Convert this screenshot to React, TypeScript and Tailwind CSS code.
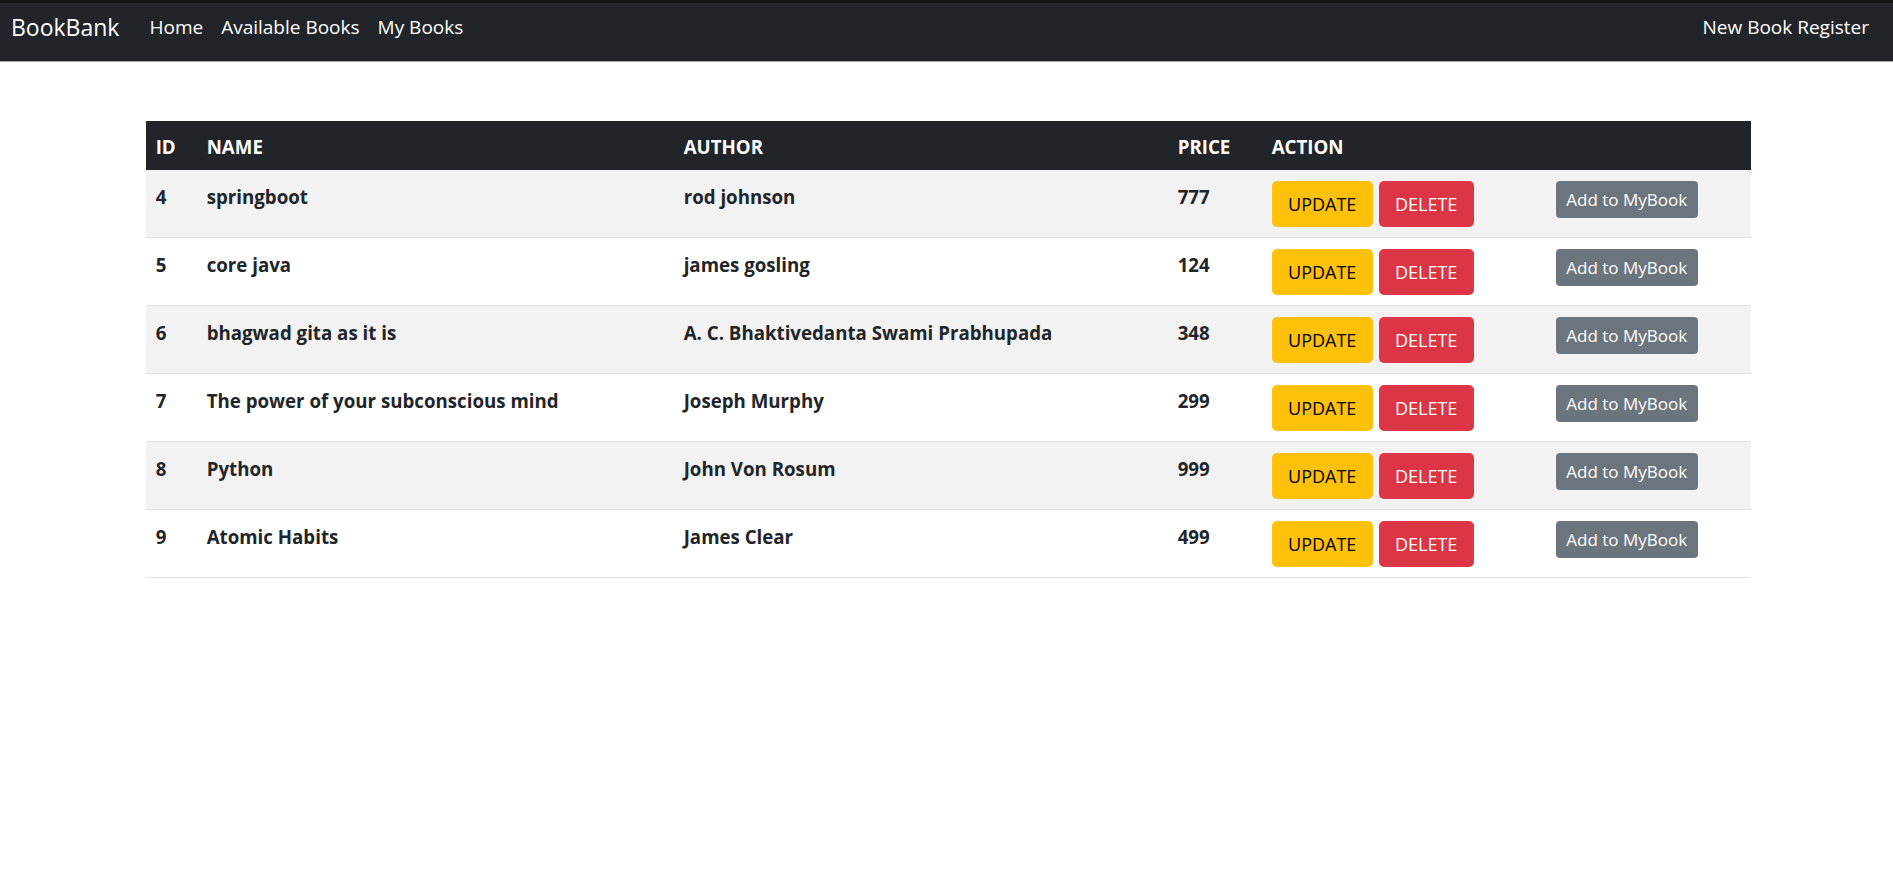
const books = [
  { id: 4, name: 'springboot', author: 'rod johnson', price: 777 },
  { id: 5, name: 'core java', author: 'james gosling', price: 124 },
  { id: 6, name: 'bhagwad gita as it is', author: 'A. C. Bhaktivedanta Swami Prabhupada', price: 348 },
  { id: 7, name: 'The power of your subconscious mind', author: 'Joseph Murphy', price: 299 },
  { id: 8, name: 'Python', author: 'John Von Rosum', price: 999 },
  { id: 9, name: 'Atomic Habits', author: 'James Clear', price: 499 },
];

export default function App() {
  return (
    <div className="min-h-screen bg-white text-[#212529] font-['Open_Sans',sans-serif]">
      <nav className="h-[62px] bg-[#212529] border-t-[3px] border-b border-t-[#111317] border-b-[#a3a3a3] flex items-start justify-between pl-[11px] pr-[24px] pt-[11px] leading-[27px]">
        <div className="flex items-center">
          <span className="text-[23px] text-white mr-[21px]">BookBank</span>
          <a className="text-[19px] text-white px-[9px]">Home</a>
          <a className="text-[19px] text-white px-[9px]">Available Books</a>
          <a className="text-[19px] text-white px-[9px]">My Books</a>
        </div>
        <a className="text-[19px] text-white">New Book Register</a>
      </nav>

      <div className="pl-[4px]">
        <table className="w-[85%] mx-auto mt-[59px] table-fixed border-collapse text-[18.7px] font-bold">
          <colgroup>
            <col className="w-[51px]" />
            <col className="w-[477px]" />
            <col className="w-[494px]" />
            <col className="w-[94px]" />
            <col className="w-[284px]" />
            <col />
          </colgroup>
          <thead>
            <tr className="bg-[#212529] text-white h-[49px] text-left">
              <th className="px-[10px] pt-[11px] pb-[7px]">ID</th>
              <th className="px-[10px] pt-[11px] pb-[7px]">NAME</th>
              <th className="px-[10px] pt-[11px] pb-[7px]">AUTHOR</th>
              <th className="px-[10px] pt-[11px] pb-[7px]">PRICE</th>
              <th className="px-[10px] pt-[11px] pb-[7px]">ACTION</th>
              <th className="px-[10px] pt-[11px] pb-[7px]"></th>
            </tr>
          </thead>
          <tbody>
            {books.map((b, i) => (
              <tr key={b.id} className={`border-b border-[#dee2e6] ${i % 2 === 0 ? 'bg-[#f2f2f2]' : 'bg-white'}`}>
                <td className="px-[10px] pt-[13px] align-top">{b.id}</td>
                <td className="px-[10px] pt-[13px] align-top">{b.name}</td>
                <td className="px-[10px] pt-[13px] align-top">{b.author}</td>
                <td className="px-[10px] pt-[13px] align-top">{b.price}</td>
                <td className="px-[10px] pt-[11px] pb-[10px] align-top">
                  <div className="flex gap-[6px] font-normal">
                    <button className="h-[46px] w-[101px] rounded-[5px] bg-[#ffc107] text-black text-[18px]">UPDATE</button>
                    <button className="h-[46px] w-[95px] rounded-[5px] bg-[#dc3545] text-white text-[18px]">DELETE</button>
                  </div>
                </td>
                <td className="px-[10px] pt-[11px] align-top">
                  <button className="h-[37px] w-[142px] rounded-[4px] bg-[#6c757d] text-white text-[17px] font-normal">Add to MyBook</button>
                </td>
              </tr>
            ))}
          </tbody>
        </table>
      </div>
    </div>
  );
}
